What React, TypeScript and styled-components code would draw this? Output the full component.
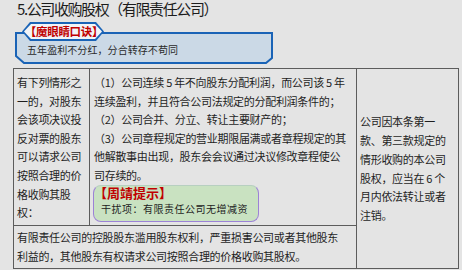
import React from "react";
import styled, { createGlobalStyle } from "styled-components";

const Global = createGlobalStyle`
  html, body { margin: 0; padding: 0; background: #e4e4e4; }
  body { font-family: "Noto Sans CJK SC", "Noto Sans", sans-serif; color: #1e1e1e; }
`;

const Page = styled.div`
  width: 462px;
  height: 270px;
  overflow: hidden;
  padding-top: 1px;
  box-sizing: border-box;
`;

const Title = styled.div`
  margin-left: 17px;
  font-size: 15px;
  line-height: 15px;
  letter-spacing: -1.4px;
  color: #1c1c1c;
  white-space: nowrap;
`;

const Callout = styled.div`
  position: relative;
  margin: 16px 0 0 15px;
  width: 258px;
  height: 32px;
`;

const Frame = styled.svg`
  position: absolute;
  left: 0;
  top: 0;
  width: 258px;
  height: 32px;
`;

const Badge = styled.div`
  position: absolute;
  left: 7px;
  top: -10px;
  width: 82px;
  height: 19px;
  background: #1a63b6;
  clip-path: polygon(0 50%, 8px 0, calc(100% - 8px) 0, 100% 50%, calc(100% - 8px) 100%, 8px 100%);
  z-index: 2;
`;

const BadgeInner = styled.div`
  position: absolute;
  inset: 2px;
  background: #f2f4f7;
  clip-path: polygon(0 50%, 7px 0, calc(100% - 7px) 0, 100% 50%, calc(100% - 7px) 100%, 7px 100%);
  display: flex;
  align-items: center;
  justify-content: center;
  color: #c00000;
  font-weight: 700;
  font-size: 11.5px;
  line-height: 15px;
  letter-spacing: -0.3px;
  white-space: nowrap;
  padding-left: 2px;
`;

const Motto = styled.div`
  position: relative;
  z-index: 1;
  padding: 11px 0 0 12px;
  font-size: 10px;
  line-height: 14px;
  letter-spacing: 0.07px;
  color: #2a2a2a;
  white-space: nowrap;
`;

const Table = styled.div`
  display: grid;
  grid-template-columns: 76px 267px 102px;
  grid-template-rows: 157px 43px;
  width: fit-content;
  margin: 4px 0 0 13px;
  border-left: 1px solid #5c5c5c;
  border-top: 1px solid #5c5c5c;
`;

const Cell = styled.div<{ $col: string; $row: string; $center?: boolean; $pad: string; $lh: number }>`
  grid-column: ${(p) => p.$col};
  grid-row: ${(p) => p.$row};
  box-sizing: border-box;
  border-right: 1px solid #5c5c5c;
  border-bottom: 1px solid #5c5c5c;
  padding: ${(p) => p.$pad};
  display: flex;
  flex-direction: column;
  justify-content: ${(p) => (p.$center ? "center" : "flex-start")};
  font-size: 11px;
  line-height: ${(p) => p.$lh}px;
  letter-spacing: -0.3px;
  color: #1e1e1e;
`;

const Line = styled.div`
  white-space: nowrap;
`;

const Tip = styled.div`
  margin-left: -1px;
  width: 166px;
  height: 37px;
  box-sizing: border-box;
  background: #c9e2c1;
  border: 1.5px solid #9c82d6;
  border-top-color: #b7cfc0;
  border-radius: 8px;
  padding: 0;
`;

const TipHead = styled.div`
  color: #c00000;
  font-weight: 700;
  font-size: 13px;
  line-height: 14px;
  letter-spacing: 0;
  white-space: nowrap;
`;

const TipBody = styled.div`
  padding-left: 7px;
  font-size: 10px;
  line-height: 17px;
  letter-spacing: 0.5px;
  color: #222;
  white-space: nowrap;
`;

const col1 = ["有下列情形之", "一的，对股东", "会该项决议投", "反对票的股东", "可以请求公司", "按照合理的价", "格收购其股", "权："];
const col2 = [
  "（1）公司连续 5 年不向股东分配利润，而公司该 5 年",
  "连续盈利，并且符合公司法规定的分配利润条件的；",
  "（2）公司合并、分立、转让主要财产的；",
  "（3）公司章程规定的营业期限届满或者章程规定的其",
  "他解散事由出现，股东会会议通过决议修改章程使公",
  "司存续的。",
];
const col3 = ["公司因本条第一", "款、第三款规定的", "情形收购的本公司", "股权，应当在 6 个", "月内依法转让或者", "注销。"];
const row2 = [
  "有限责任公司的控股股东滥用股东权利，严重损害公司或者其他股东",
  "利益的，其他股东有权请求公司按照合理的价格收购其股权。",
];

export default function App() {
  return (
    <>
      <Global />
      <Page>
        <Title>5.公司收购股权（有限责任公司）</Title>
        <Callout>
          <Frame viewBox="0 0 258 32">
            <polygon
              points="1,1 257,1 257,26 251,31 9,31 1,24"
              fill="#cbd9e6"
              stroke="#1a63b6"
              strokeWidth="2"
            />
          </Frame>
          <Badge>
            <BadgeInner>【魔眼睛口诀】</BadgeInner>
          </Badge>
          <Motto>五年盈利不分红，分合转存不苟同</Motto>
        </Callout>
        <Table>
          <Cell $col="1" $row="1" $pad="4px 0 0 3px" $lh={18.6}>
            {col1.map((t) => (
              <Line key={t}>{t}</Line>
            ))}
          </Cell>
          <Cell $col="2" $row="1" $pad="4px 0 0 4px" $lh={18.6}>
            {col2.map((t) => (
              <Line key={t}>{t}</Line>
            ))}
            <Tip>
              <TipHead>【周靖提示】</TipHead>
              <TipBody>干扰项：有限责任公司无增减资</TipBody>
            </Tip>
          </Cell>
          <Cell $col="3" $row="1 / span 2" $center $pad="0 0 0 3px" $lh={18.8}>
            {col3.map((t) => (
              <Line key={t}>{t}</Line>
            ))}
          </Cell>
          <Cell $col="1 / span 2" $row="2" $center $pad="0 0 0 3px" $lh={18.6}>
            {row2.map((t) => (
              <Line key={t}>{t}</Line>
            ))}
          </Cell>
        </Table>
      </Page>
    </>
  );
}
